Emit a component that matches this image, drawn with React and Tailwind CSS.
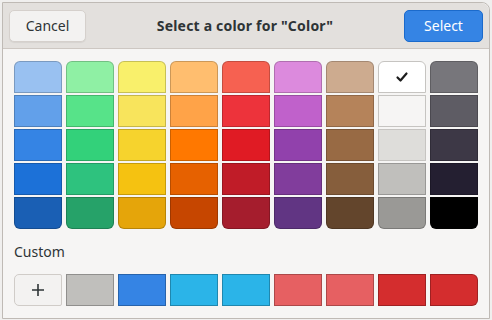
import React from "react";

const palette = [
  ["#99c1f1", "#62a0ea", "#3584e4", "#1c71d8", "#1a5fb4"],
  ["#8ff0a4", "#57e389", "#33d17a", "#2ec27e", "#26a269"],
  ["#f9f06b", "#f8e45c", "#f6d32d", "#f5c211", "#e5a50a"],
  ["#ffbe6f", "#ffa348", "#ff7800", "#e66100", "#c64600"],
  ["#f66151", "#ed333b", "#e01b24", "#c01c28", "#a51d2d"],
  ["#dc8add", "#c061cb", "#9141ac", "#813d9c", "#613583"],
  ["#cdab8f", "#b5835a", "#986a44", "#865e3c", "#63452c"],
  ["#ffffff", "#f6f5f4", "#deddda", "#c0bfbc", "#9a9996"],
  ["#77767b", "#5e5c64", "#3d3846", "#241f31", "#000000"],
];

const custom = [
  "#c0bfbc",
  "#3584e4",
  "#2bb4e8",
  "#2bb4e8",
  "#e66062",
  "#e66062",
  "#d42d2e",
  "#d42d2e",
];

const Check = () => (
  <svg width="14" height="14" viewBox="0 0 14 14" fill="none">
    <path
      d="M2.5 7.5 L5.5 10.5 L11.5 3.5"
      stroke="#1c1c1c"
      strokeWidth="2.2"
      strokeLinecap="round"
      strokeLinejoin="round"
    />
  </svg>
);

const App = () => {
  return (
    <div
      className="w-[492px] h-[320px] bg-[#f0efee] pl-[2px] pt-[2px] overflow-hidden"
      style={{ fontFamily: '"Noto Sans", "Open Sans", sans-serif' }}
    >
      {/* window */}
      <div className="w-[488px] h-[317px] border border-[#bfbab5] rounded-tr-[8px] bg-[#f6f5f4] flex flex-col overflow-hidden">
        {/* header bar */}
        <div className="h-[46px] flex items-center justify-between px-[6px] bg-[#e3e0dd] border-b border-[#cdc7c2] rounded-tr-[8px]">
          <button className="w-[77px] h-[32px] rounded-[5px] border border-[#d5d0cc] bg-[#f3f2f1] text-[14px] text-[#2e3436] shadow-[0_1px_1px_rgba(0,0,0,0.06)]">
            Cancel
          </button>
          <h1 className="text-[14px] font-bold text-[#2e3436] tracking-[0.2px]">
            Select a color for "Color"
          </h1>
          <button className="w-[79px] h-[32px] rounded-[5px] border border-[#1b6acb] bg-[#3584e4] text-[14px] text-white">
            Select
          </button>
        </div>

        {/* body */}
        <div className="px-[11px] pt-[12px]">
          <div className="flex gap-[4px]">
            {palette.map((col, ci) => (
              <div key={ci} className="flex flex-col gap-[2px]">
                {col.map((c, ri) => (
                  <div
                    key={ri}
                    className={`w-[48px] h-[32px] border flex items-center justify-center ${
                      c === "#ffffff" || c === "#f6f5f4" || c === "#deddda"
                        ? "border-[#c6c4c1]"
                        : "border-black/20"
                    } ${ri === 0 ? "rounded-t-[6px]" : ""} ${
                      ri === 4 ? "rounded-b-[6px]" : ""
                    }`}
                    style={{ backgroundColor: c }}
                  >
                    {ci === 7 && ri === 0 && <Check />}
                  </div>
                ))}
              </div>
            ))}
          </div>

          <div className="mt-[12px] h-[20px] flex items-center text-[14px] text-[#2e3436]">
            Custom
          </div>

          <div className="mt-[13px] flex gap-[4px]">
            <button className="w-[48px] h-[32px] rounded-l-[5px] rounded-r-[2px] border border-[#d0ccc8] bg-[#f3f2f1] flex items-center justify-center">
              <svg width="16" height="16" viewBox="0 0 16 16">
                <path
                  d="M8 2 V14 M2 8 H14"
                  stroke="#2e3436"
                  strokeWidth="1.6"
                />
              </svg>
            </button>
            {custom.map((c, i) => (
              <div
                key={i}
                className={`w-[48px] h-[32px] border border-black/25 ${
                  i === custom.length - 1 ? "rounded-r-[6px]" : ""
                }`}
                style={{ backgroundColor: c }}
              />
            ))}
          </div>
        </div>
      </div>
    </div>
  );
};

export default App;
